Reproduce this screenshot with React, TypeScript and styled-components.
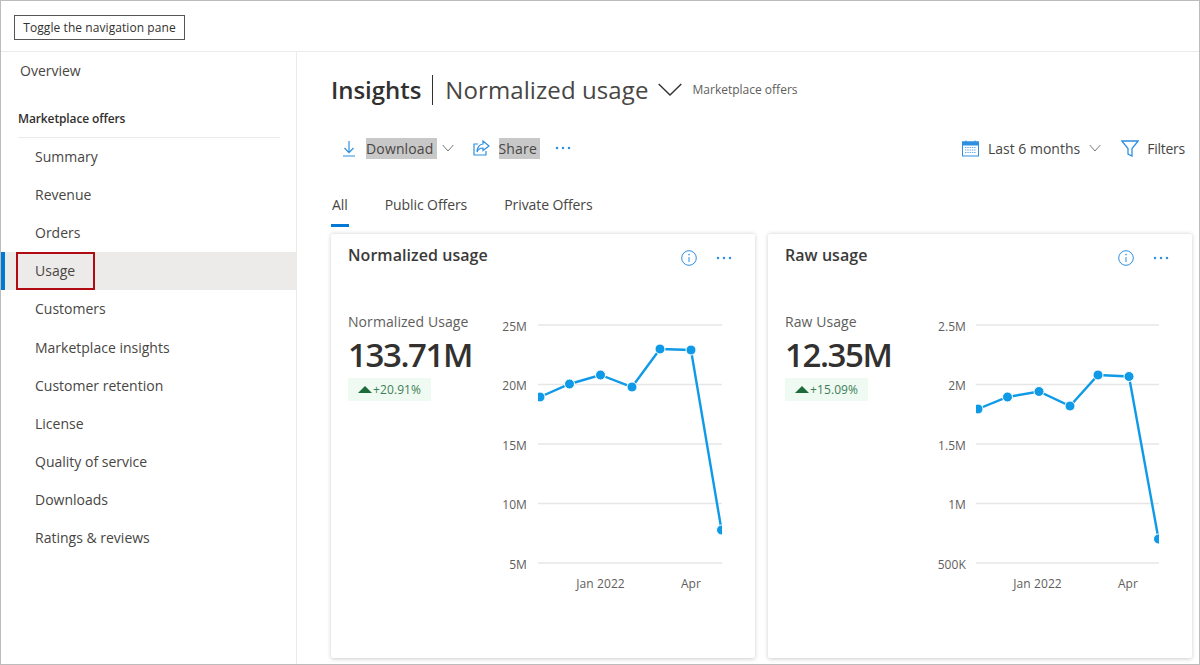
import React from "react";
import styled, { createGlobalStyle } from "styled-components";

const Global = createGlobalStyle`
  html, body { margin: 0; padding: 0; background: #fff; }
  * { box-sizing: border-box; }
  body { font-family: "Open Sans", "Noto Sans", "Liberation Sans", sans-serif; color: #323130; }
`;

const Frame = styled.div`
  width: 1200px;
  height: 665px;
  border: 1px solid #bcbcbc;
  display: flex;
  flex-direction: column;
  overflow: hidden;
  background: #fff;
`;
const Header = styled.header`
  height: 51px;
  flex: none;
  border-bottom: 1px solid #edebe9;
  padding: 14px 0 0 13px;
`;
const ToggleButton = styled.button`
  display: block;
  width: 171px;
  height: 25px;
  border: 1px solid #555;
  background: #fff;
  color: #323130;
  font: 12px "Open Sans", sans-serif;
  letter-spacing: 0.07px;
  padding: 0;
  white-space: nowrap;
`;
const Body = styled.div`
  display: flex;
  flex: 1;
  min-height: 0;
`;
const Nav = styled.nav`
  width: 296px;
  flex: none;
  border-right: 1px solid #edebe9;
`;
const Overview = styled.div`
  height: 38px;
  line-height: 38px;
  padding-left: 19px;
  font-size: 14px;
  color: #484644;
`;
const SectionLabel = styled.div`
  margin: 9.6px 16px 0 17px;
  height: 38px;
  line-height: 37px;
  border-bottom: 1px solid #edebe9;
  font-size: 12px;
  font-weight: 600;
  letter-spacing: -0.12px;
  color: #323130;
`;
const NavRow = styled.div<{ $active?: boolean }>`
  position: relative;
  height: 38.2px;
  line-height: 38.8px;
  padding-left: 34px;
  font-size: 14px;
  color: #484644;
  background: ${(p) => (p.$active ? "#edebe9" : "transparent")};
  ${(p) => p.$active && "border-left: 4px solid #0078d4; padding-left: 30px;"}
`;
const Highlight = styled.span`
  position: absolute;
  left: 11px;
  top: 0;
  width: 79px;
  height: 38px;
  border: 2px solid #b00a12;
`;
const Main = styled.main`
  flex: 1;
  min-width: 0;
  padding: 18px 7px 0 34px;
`;
const TitleRow = styled.div`
  display: flex;
  align-items: center;
  height: 40px;
`;
const Title = styled.h1`
  margin: 0;
  font-size: 24px;
  font-weight: 600;
  letter-spacing: -0.05px;
  color: #323130;
  padding-right: 11px;
  border-right: 1px solid #323130;
  line-height: 30px;
`;
const SubTitle = styled.span`
  font-size: 24px;
  letter-spacing: 0.1px;
  margin: 0 0 2px 12px;
  color: #484644;
`;
const Scope = styled.span`
  font-size: 12px;
  margin: 0 0 2px 11px;
  color: #605e5c;
`;
const Toolbar = styled.div`
  display: flex;
  align-items: center;
  height: 40px;
  margin-top: 18px;
  margin-right: 7px;
  padding-left: 10px;
`;
const Spacer = styled.div`
  flex: 1;
`;
const Selected = styled.span<{ $gap: number }>`
  background: #c8c8c8;
  height: 21px;
  line-height: 21px;
  font-size: 14px;
  letter-spacing: 0.15px;
  color: #484644;
  padding: 0 3px 0 0;
  margin-left: ${(p) => p.$gap}px;
`;
const ToolText = styled.span<{ $gap: number; $spacing?: number }>`
  font-size: 14px;
  letter-spacing: ${(p) => p.$spacing ?? 0}px;
  color: #484644;
  margin-left: ${(p) => p.$gap}px;
`;
const IconSlot = styled.span<{ $gap?: number }>`
  display: inline-flex;
  margin-left: ${(p) => p.$gap ?? 0}px;
`;
const Tabs = styled.div`
  display: flex;
  gap: 35px;
  height: 43px;
  margin-top: 16px;
`;
const Tab = styled.div<{ $active?: boolean }>`
  height: 43px;
  line-height: 41px;
  font-size: 14px;
  letter-spacing: -0.08px;
  color: #484644;
  padding: 0 1px;
  border-bottom: 3px solid ${(p) => (p.$active ? "#0078d4" : "transparent")};
`;
const Cards = styled.div`
  display: flex;
  gap: 13px;
  margin-top: 7px;
`;
const Card = styled.section`
  width: 424px;
  height: 424px;
  background: #fff;
  border-radius: 2px;
  box-shadow: 0 0.5px 4px rgba(0, 0, 0, 0.2);
  padding: 0 17px;
`;
const CardHeader = styled.div`
  display: flex;
  height: 50px;
  padding-top: 10px;
`;
const CardTitle = styled.h2`
  margin: 0;
  flex: 1;
  font-size: 16px;
  line-height: 22px;
  font-weight: 600;
  letter-spacing: 0.05px;
  color: #3b3a39;
`;
const CardActions = styled.div`
  display: flex;
  align-items: center;
  gap: 19px;
  height: 28px;
  padding-right: 6px;
`;
const CardBody = styled.div`
  display: flex;
`;
const Stats = styled.div`
  width: 142px;
  flex: none;
  padding-top: 28px;
`;
const StatLabel = styled.div`
  font-size: 14px;
  line-height: 20px;
  letter-spacing: 0.07px;
  color: #605e5c;
`;
const StatValue = styled.div`
  font-size: 33px;
  font-weight: 600;
  line-height: 42px;
  letter-spacing: -1.4px;
  color: #323130;
  margin-top: 2px;
`;
const Delta = styled.div`
  display: inline-flex;
  align-items: center;
  gap: 1px;
  height: 23px;
  width: 83px;
  margin-top: 2px;
  padding-left: 10px;
  background: #eefaf2;
  font-size: 12px;
  letter-spacing: 0.1px;
  color: #3f7f57;
`;
const ChartSvg = styled.svg`
  display: block;
  margin-top: 30px;
  flex: none;
`;
const AxisLabel = styled.text`
  font-size: 12px;
  letter-spacing: 0.1px;
  fill: #605e5c;
  font-family: "Open Sans", sans-serif;
`;

const BLUE = "#2f8fe0";

const Chevron = ({ w = 12, h = 7, color = "#797775", sw = 1 }: { w?: number; h?: number; color?: string; sw?: number }) => (
  <svg width={w} height={h + 2} viewBox={`0 0 ${w} ${h + 2}`} fill="none">
    <path d={`M0.7 1 L${w / 2} ${h} L${w - 0.7} 1`} stroke={color} strokeWidth={sw} />
  </svg>
);
const DownloadIcon = () => (
  <svg width="16" height="17" viewBox="0 0 16 17" fill="none" stroke={BLUE} strokeWidth="1.2">
    <path d="M8 1 V12.5 M3.5 8 L8 12.7 L12.5 8 M2 16 H14" />
  </svg>
);
const ShareIcon = () => (
  <svg width="17" height="16" viewBox="0 0 17 16" fill="none" stroke={BLUE} strokeWidth="1.2">
    <path d="M5 4 H1 V15 H13 V11" />
    <path d="M10 1 L16 6 L10 10.5 V8 C7 8 5 9.5 4 12 C4 7.5 6.5 4 10 4 Z" />
  </svg>
);
const Dots = () => (
  <svg width="16" height="4" viewBox="0 0 16 4" fill={BLUE}>
    <circle cx="2" cy="2" r="1.25" /><circle cx="8" cy="2" r="1.25" /><circle cx="14" cy="2" r="1.25" />
  </svg>
);
const CalendarIcon = () => (
  <svg width="17" height="17" viewBox="0 0 17 17" fill="none" stroke={BLUE}>
    <rect x="0.5" y="2" width="16" height="14" fill="#fff" />
    <rect x="0.5" y="2" width="16" height="3" fill={BLUE} />
    <path d="M4 0.5 V3 M13 0.5 V3" />
    <path d="M3 7.5 H14 M3 10 H14 M3 12.5 H14" strokeDasharray="1.4 0.9" opacity="0.75" />
  </svg>
);
const FilterIcon = () => (
  <svg width="18" height="17" viewBox="0 0 18 17" fill="none" stroke={BLUE} strokeWidth="1.3">
    <path d="M0.8 1 H17.2 L11 8.5 V16 L7 14 V8.5 Z" />
  </svg>
);
const InfoIcon = () => (
  <svg width="16" height="16" viewBox="0 0 16 16" fill="none" stroke={BLUE}>
    <circle cx="8" cy="8" r="7.3" />
    <path d="M8 7 V12" />
    <circle cx="8" cy="4.6" r="0.8" fill={BLUE} stroke="none" />
  </svg>
);
const UpTriangle = () => (
  <svg width="14" height="7" viewBox="0 0 14 7" fill="#1c6b38">
    <path d="M7 0 L14 7 H0 Z" />
  </svg>
);

type ChartData = {
  id: string;
  yLabels: string[];
  labelRight: number;
  gridStart: number;
  points: [number, number][];
};

const GRID_Y = [11, 70.5, 130, 189.5, 249];

const Chart = ({ id, yLabels, labelRight, gridStart, points }: ChartData) => (
  <ChartSvg width="240" height="290" viewBox="0 0 240 290">
    <defs>
      <clipPath id={id}>
        <rect x={gridStart} y="0" width={232 - gridStart} height="260" />
      </clipPath>
    </defs>
    {GRID_Y.map((y, i) => (
      <React.Fragment key={y}>
        <line x1={gridStart} x2="232" y1={y} y2={y} stroke="#e6e6e6" strokeWidth="1.4" />
        <AxisLabel x={labelRight} y={y + 5.5} textAnchor="end">{yLabels[i]}</AxisLabel>
      </React.Fragment>
    ))}
    <g clipPath={`url(#${id})`}>
      <polyline points={points.map((p) => p.join(",")).join(" ")} fill="none" stroke="#0f9ae8" strokeWidth="2.4" />
      {points.map(([x, y]) => (
        <circle key={x} cx={x} cy={y} r="5" fill="#0f9ae8" stroke="#fff" strokeWidth="1" />
      ))}
    </g>
    <AxisLabel x="110.5" y="274" textAnchor="middle">Jan 2022</AxisLabel>
    <AxisLabel x="201" y="274" textAnchor="middle">Apr</AxisLabel>
  </ChartSvg>
);

const MetricCard = ({ title, label, value, delta, chart }: { title: string; label: string; value: string; delta: string; chart: ChartData }) => (
  <Card>
    <CardHeader>
      <CardTitle>{title}</CardTitle>
      <CardActions><InfoIcon /><Dots /></CardActions>
    </CardHeader>
    <CardBody>
      <Stats>
        <StatLabel>{label}</StatLabel>
        <StatValue>{value}</StatValue>
        <Delta><UpTriangle />{delta}</Delta>
      </Stats>
      <Chart {...chart} />
    </CardBody>
  </Card>
);

const navItems = ["Summary", "Revenue", "Orders", "Usage", "Customers", "Marketplace insights", "Customer retention", "License", "Quality of service", "Downloads", "Ratings & reviews"];

const normalized: ChartData = {
  id: "clip-normalized",
  yLabels: ["25M", "20M", "15M", "10M", "5M"],
  labelRight: 37,
  gridStart: 48,
  points: [[50, 83], [79.5, 70], [110.5, 61], [142, 73], [170, 35], [201, 36], [231.5, 216]],
};
const raw: ChartData = {
  id: "clip-raw",
  yLabels: ["2.5M", "2M", "1.5M", "1M", "500K"],
  labelRight: 39,
  gridStart: 49,
  points: [[51, 95], [80.5, 83], [112, 77.5], [143, 92], [171, 61], [202, 62.5], [231.5, 225]],
};

export default function App() {
  return (
    <>
      <Global />
      <Frame>
        <Header><ToggleButton>Toggle the navigation pane</ToggleButton></Header>
        <Body>
          <Nav>
            <Overview>Overview</Overview>
            <SectionLabel>Marketplace offers</SectionLabel>
            {navItems.map((item) => (
              <NavRow key={item} $active={item === "Usage"}>
                {item}
                {item === "Usage" && <Highlight />}
              </NavRow>
            ))}
          </Nav>
          <Main>
            <TitleRow>
              <Title>Insights</Title>
              <SubTitle>Normalized usage</SubTitle>
              <IconSlot $gap={9}><Chevron w={24} h={12} color="#323130" sw={1.4} /></IconSlot>
              <Scope>Marketplace offers</Scope>
            </TitleRow>
            <Toolbar>
              <DownloadIcon />
              <Selected $gap={9}>Download</Selected>
              <IconSlot $gap={5}><Chevron /></IconSlot>
              <IconSlot $gap={19}><ShareIcon /></IconSlot>
              <Selected $gap={9}>Share</Selected>
              <IconSlot $gap={15}><Dots /></IconSlot>
              <Spacer />
              <CalendarIcon />
              <ToolText $gap={9}>Last 6 months</ToolText>
              <IconSlot $gap={9}><Chevron /></IconSlot>
              <IconSlot $gap={20}><FilterIcon /></IconSlot>
              <ToolText $gap={8} $spacing={-0.25}>Filters</ToolText>
            </Toolbar>
            <Tabs>
              <Tab $active>All</Tab>
              <Tab>Public Offers</Tab>
              <Tab>Private Offers</Tab>
            </Tabs>
            <Cards>
              <MetricCard title="Normalized usage" label="Normalized Usage" value="133.71M" delta="+20.91%" chart={normalized} />
              <MetricCard title="Raw usage" label="Raw Usage" value="12.35M" delta="+15.09%" chart={raw} />
            </Cards>
          </Main>
        </Body>
      </Frame>
    </>
  );
}
